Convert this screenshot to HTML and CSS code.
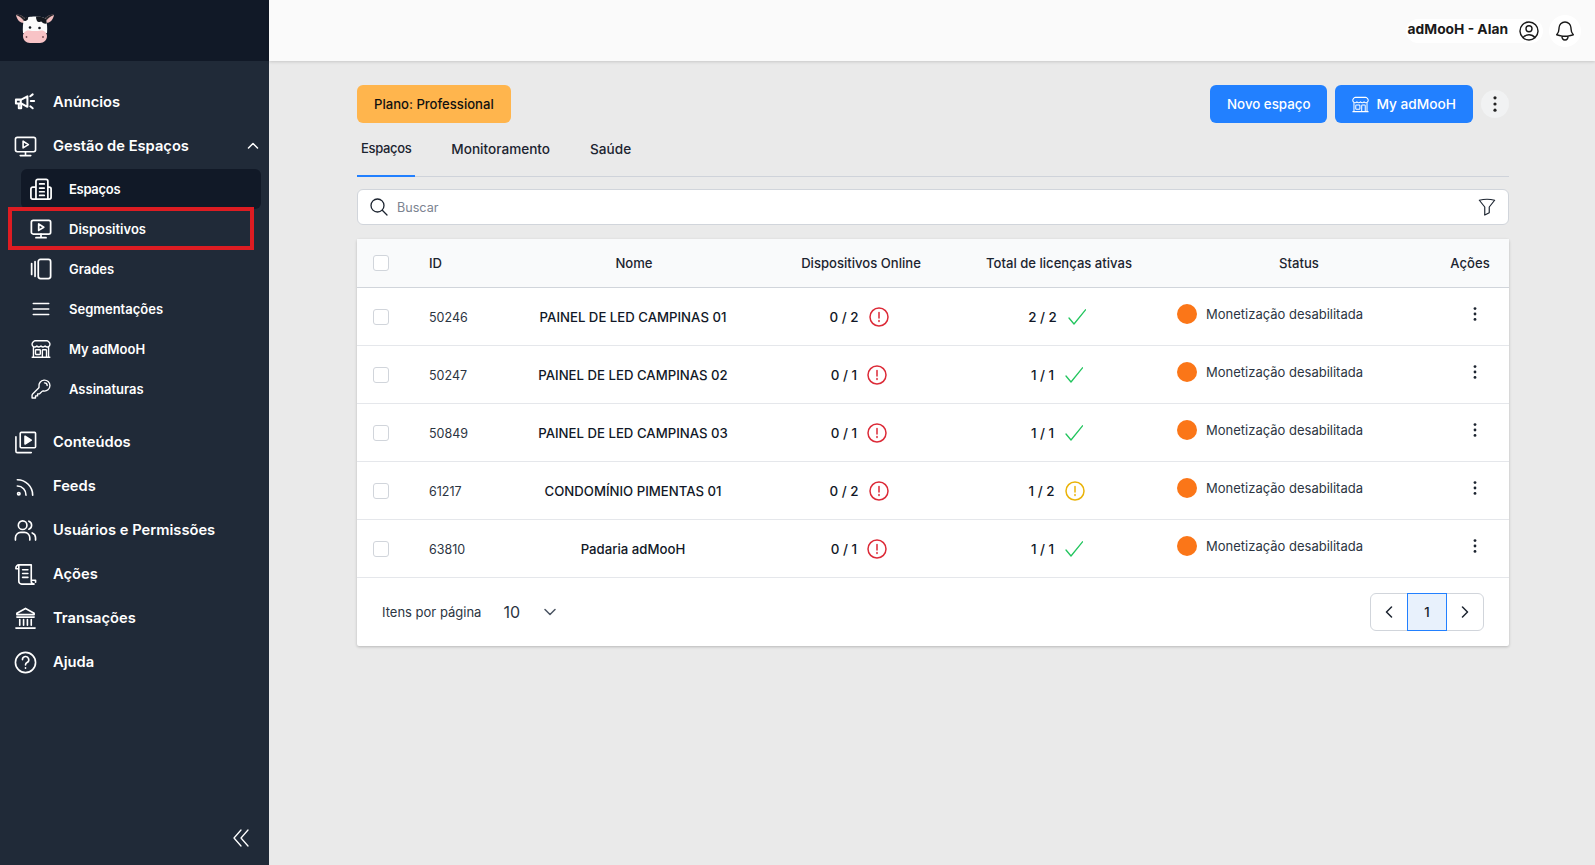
FILE: index.html
```html
<!DOCTYPE html>
<html lang="pt-BR">
<head>
<meta charset="utf-8">
<title>adMooH - Espaços</title>
<link rel="stylesheet" href="styles.css">
</head>
<body>
<svg class="defs" width="0" height="0" aria-hidden="true">
  <symbol id="i-store" viewBox="0 0 24 24"><path d="M13.5 21v-7.5a.75.75 0 0 1 .75-.75h3a.75.75 0 0 1 .75.75V21m-4.5 0H2.36m11.14 0H18m0 0h3.64m-1.39 0V9.349M3.75 21V9.349m0 0a3.001 3.001 0 0 0 3.75-.615A2.993 2.993 0 0 0 9.75 9.75c.896 0 1.7-.393 2.25-1.016a2.993 2.993 0 0 0 2.25 1.016c.896 0 1.7-.393 2.25-1.016a3.001 3.001 0 0 0 3.75.614m-16.5 0a3.004 3.004 0 0 1-.621-4.72l1.189-1.19A1.5 1.5 0 0 1 5.378 3h13.243a1.5 1.5 0 0 1 1.06.44l1.19 1.189a3 3 0 0 1-.621 4.72M6.75 18h3.75a.75.75 0 0 0 .75-.75V13.5a.75.75 0 0 0-.75-.75H6.75a.75.75 0 0 0-.75.75v3.75c0 .414.336.75.75.75Z"/></symbol>
  <symbol id="i-screen" viewBox="0 0 24 24"><rect x="1.5" y="2.5" width="21" height="15" rx="2"/><path d="M12 17.5v4M6.5 21.5h11"/><path d="M9.5 6.5v7l5.5-3.5z"/></symbol>
  <symbol id="i-alert" viewBox="0 0 20 20"><circle cx="10" cy="10" r="9"/><path d="M10 5.5v5.5M10 13.6v.9"/></symbol>
  <symbol id="i-check" viewBox="0 0 18 16"><path d="M1 9l5 6L17.500 .8"/></symbol>
  <symbol id="i-dots" viewBox="0 0 4 18"><circle cx="2" cy="2" r="1.800"/><circle cx="2" cy="9" r="1.800"/><circle cx="2" cy="16" r="1.800"/></symbol>
</svg>

<div class="app">
  <aside class="sidebar">
    <div class="brand">
      <svg class="logo" viewBox="0 0 40 32" aria-hidden="true">
        <path d="M9 9C5 9 2 6 1 1c3-1 8 1 10 5z" fill="#f2bfc0"/>
        <path d="M1 1c3-1 8 1 10 5l-2 1C7 4 4 2 1 1z" fill="#2a2a2e"/>
        <path d="M31 9c4 0 7-3 8-8-3-1-8 1-10 5z" fill="#f2bfc0"/>
        <path d="M39 1c-3-1-8 1-10 5l2 1c2-3 5-5 8-6z" fill="#2a2a2e"/>
        <path d="M9 5c3-3.500 19-3.500 22 0 1 4 1.500 9 1 14H8c-.5-5 0-10 1-14z" fill="#fbfbfb"/>
        <path d="M21 2.500c4-.3 8 .5 10 2.500.4 1.500.6 3 .8 4.500-2.500.5-4.500-.5-5.500-2-1.500.8-3.500.5-4.300-.5-.8-1.500-1-3-1-4.500z" fill="#14181f"/>
        <path d="M9 5c1-1 2.500-1.800 4-2.200.5 1.500-.5 3.500-2 4-1 .3-1.800.2-2.500-.2z" fill="#14181f"/>
        <path d="M8 22c0-3.500 3-6 6-5.500 4 .7 8 .7 12 0 3-.5 6 2 6 5.500 0 4-3 7-7 7H15c-4 0-7-3-7-7z" fill="#f8c3c6"/>
        <circle cx="15" cy="13.500" r="1.300" fill="#14181f"/><circle cx="24.500" cy="14" r="1.300" fill="#14181f"/>
        <circle cx="11.500" cy="23" r=".9" fill="#7a5055"/><circle cx="28" cy="23" r=".9" fill="#7a5055"/>
      </svg>
    </div>
    <nav class="nav">
      <a class="nav-item">
        <svg class="ico heavy" viewBox="0 0 24 24"><path d="M2 9h5.500L14 5.500v11L7.500 13H2z"/><path d="M7 9.500v3M5 13.500v4.500h2.500v-4M17.500 10.500h3.500M17 5.500l2.500-2M17 16l2.500 2"/></svg>
        <span>Anúncios</span>
      </a>
      <a class="nav-item">
        <svg class="ico"><use href="#i-screen"/></svg>
        <span class="grow">Gestão de Espaços</span>
        <svg class="chev" viewBox="0 0 12 8"><path d="M1.500 6L6 1.500 10.500 6"/></svg>
      </a>
      <div class="sub">
        <a class="sub-item active">
          <svg class="ico strong" viewBox="0 0 24 24"><path d="M6.500 23V3.500a2 2 0 0 1 2-2h9a2 2 0 0 1 2 2V23M6.500 10H3a2 2 0 0 0-2 2v9a2 2 0 0 0 2 2h18a2 2 0 0 0 2-2v-9a2 2 0 0 0-2-2h-1.500M10.500 6.500h5M10.500 11h5M10.500 15h5M10.500 19h5"/></svg>
          <span class="tight">Espaços</span>
        </a>
        <a class="sub-item flagged">
          <svg class="ico strong"><use href="#i-screen"/></svg>
          <span>Dispositivos</span>
        </a>
        <a class="sub-item">
          <svg class="ico strong" viewBox="0 0 24 24"><rect x="9" y="1.500" width="13.500" height="21" rx="2.500"/><path d="M1.800 6v12M5.500 4v16"/></svg>
          <span>Grades</span>
        </a>
        <a class="sub-item">
          <svg class="ico" viewBox="0 0 24 24"><path d="M3.500 6h17M3.500 12h17M3.500 18h17"/></svg>
          <span>Segmentações</span>
        </a>
        <a class="sub-item">
          <svg class="ico"><use href="#i-store"/></svg>
          <span>My adMooH</span>
        </a>
        <a class="sub-item">
          <svg class="ico" viewBox="0 0 24 24"><path d="M15.750 5.250a3 3 0 0 1 3 3m3 0a6 6 0 0 1-7.029 5.912c-.563-.097-1.159.026-1.563.43L10.500 17.250H8.250v2.250H6v2.250H2.250v-2.818c0-.597.237-1.170.659-1.591l6.499-6.499c.404-.404.527-1 .43-1.563A6 6 0 1 1 21.750 8.250Z"/></svg>
          <span>Assinaturas</span>
        </a>
      </div>
      <a class="nav-item">
        <svg class="ico" viewBox="0 0 24 24"><rect x="6.500" y="1.500" width="16" height="16" rx="1"/><path d="M11.500 5.500v8l6.500-4z" fill="currentColor"/><path d="M2 6v15a1.500 1.500 0 0 0 1.500 1.500H18"/></svg>
        <span>Conteúdos</span>
      </a>
      <a class="nav-item">
        <svg class="ico" viewBox="0 0 24 24"><path d="M3.500 11.500a9 9 0 0 1 9 9.500M3.500 5a16 16 0 0 1 16 16"/><circle cx="5" cy="19.500" r="1.300"/></svg>
        <span>Feeds</span>
      </a>
      <a class="nav-item">
        <svg class="ico" viewBox="0 0 24 24"><circle cx="9" cy="6.500" r="4.500"/><path d="M1.500 22v-2.500A5.500 5.500 0 0 1 7 14h4a5.500 5.500 0 0 1 5.500 5.500V22M15.500 2.300a4.500 4.500 0 0 1 0 8.400M19 14.500a5.500 5.500 0 0 1 3.500 5V22"/></svg>
        <span>Usuários e Permissões</span>
      </a>
      <a class="nav-item">
        <svg class="ico" viewBox="0 0 24 24"><path d="M5 2h13v17a3 3 0 0 0 3 3H8a3 3 0 0 1-3-3V2zM5 2a3 3 0 0 0-3 3v1h3M9 7h5.500M9 11h5.500M9 15h5.500M18 18h4.500v2"/></svg>
        <span>Ações</span>
      </a>
      <a class="nav-item">
        <svg class="ico" viewBox="0 0 24 24"><path d="M12 1.500L3 6.500v1.500h18V6.500zM3 10.500h18M6 13v6M10 13v6M14 13v6M18 13v6M2 22h20"/></svg>
        <span>Transações</span>
      </a>
      <a class="nav-item">
        <svg class="ico" viewBox="0 0 24 24"><circle cx="12" cy="12" r="10.500"/><path d="M8.800 9a3.300 3.300 0 1 1 4.800 3c-1 .6-1.600 1.300-1.600 2.500M12 17.500v.5"/></svg>
        <span>Ajuda</span>
      </a>
    </nav>
    <div class="collapse">
      <svg viewBox="0 0 16 18"><path d="M8 1L1 9l7 8M15 1L8 9l7 8"/></svg>
    </div>
  </aside>

  <div class="page">
    <header class="topbar">
      <div class="user">
        <span class="user-name">adMooH - Alan</span>
        <svg class="top-ico" viewBox="0 0 24 24"><path d="M17.982 18.725A7.488 7.488 0 0 0 12 15.750a7.488 7.488 0 0 0-5.982 2.975m11.963 0a9 9 0 1 0-11.963 0m11.963 0A8.966 8.966 0 0 1 12 21a8.966 8.966 0 0 1-5.982-2.275M15 9.750a3 3 0 1 1-6 0 3 3 0 0 1 6 0Z"/></svg>
      </div>
      <div class="bell">
        <svg class="top-ico" viewBox="0 0 24 24"><path d="M14.857 17.082a23.848 23.848 0 0 0 5.454-1.310A8.967 8.967 0 0 1 18 9.750V9A6 6 0 0 0 6 9v.75a8.967 8.967 0 0 1-2.312 6.022c1.733.64 3.560 1.085 5.455 1.310m5.714 0a24.255 24.255 0 0 1-5.714 0m5.714 0a3 3 0 1 1-5.714 0"/></svg>
      </div>
    </header>

    <main class="content">
      <div class="actions">
        <div class="plan">Plano: Professional</div>
        <div class="action-group">
          <button class="btn">Novo espaço</button>
          <button class="btn btn-store"><svg class="btn-ico"><use href="#i-store"/></svg>My adMooH</button>
          <button class="more"><svg class="more-ico"><use href="#i-dots"/></svg></button>
        </div>
      </div>

      <div class="tabs">
        <a class="tab current">Espaços</a>
        <a class="tab">Monitoramento</a>
        <a class="tab">Saúde</a>
      </div>

      <div class="search">
        <svg class="search-ico" viewBox="0 0 18 18"><circle cx="7.500" cy="7.500" r="6.500"/><path d="M12.300 12.300L17 17"/></svg>
        <span class="placeholder">Buscar</span>
        <svg class="filter-ico" viewBox="0 0 20 20"><path d="M1.500 2.500c5-1.300 12-1.300 17 0L12.500 10v6.500l-5 2.500v-9z"/></svg>
      </div>

      <section class="card">
        <table class="grid">
          <colgroup>
            <col class="c-check"><col class="c-id"><col class="c-name"><col class="c-dev"><col class="c-lic"><col class="c-status"><col class="c-act">
          </colgroup>
          <thead>
            <tr>
              <th class="cb"><i class="box"></i></th>
              <th class="left">ID</th>
              <th>Nome</th>
              <th>Dispositivos Online</th>
              <th>Total de licenças ativas</th>
              <th>Status</th>
              <th>Ações</th>
            </tr>
          </thead>
          <tbody>
            <tr>
              <td class="cb"><i class="box"></i></td><td class="id">50246</td><td class="name">PAINEL DE LED CAMPINAS 01</td>
              <td><div class="count">0 / 2<svg class="alert red"><use href="#i-alert"/></svg></div></td>
              <td><div class="count lic">2 / 2<svg class="check"><use href="#i-check"/></svg></div></td>
              <td class="status"><div class="st"><i class="dot"></i>Monetização desabilitada</div></td>
              <td class="act"><svg class="kebab"><use href="#i-dots"/></svg></td>
            </tr>
            <tr>
              <td class="cb"><i class="box"></i></td><td class="id">50247</td><td class="name">PAINEL DE LED CAMPINAS 02</td>
              <td><div class="count">0 / 1<svg class="alert red"><use href="#i-alert"/></svg></div></td>
              <td><div class="count lic">1 / 1<svg class="check"><use href="#i-check"/></svg></div></td>
              <td class="status"><div class="st"><i class="dot"></i>Monetização desabilitada</div></td>
              <td class="act"><svg class="kebab"><use href="#i-dots"/></svg></td>
            </tr>
            <tr>
              <td class="cb"><i class="box"></i></td><td class="id">50849</td><td class="name">PAINEL DE LED CAMPINAS 03</td>
              <td><div class="count">0 / 1<svg class="alert red"><use href="#i-alert"/></svg></div></td>
              <td><div class="count lic">1 / 1<svg class="check"><use href="#i-check"/></svg></div></td>
              <td class="status"><div class="st"><i class="dot"></i>Monetização desabilitada</div></td>
              <td class="act"><svg class="kebab"><use href="#i-dots"/></svg></td>
            </tr>
            <tr>
              <td class="cb"><i class="box"></i></td><td class="id">61217</td><td class="name">CONDOMÍNIO PIMENTAS 01</td>
              <td><div class="count">0 / 2<svg class="alert red"><use href="#i-alert"/></svg></div></td>
              <td><div class="count lic">1 / 2<svg class="alert amber"><use href="#i-alert"/></svg></div></td>
              <td class="status"><div class="st"><i class="dot"></i>Monetização desabilitada</div></td>
              <td class="act"><svg class="kebab"><use href="#i-dots"/></svg></td>
            </tr>
            <tr>
              <td class="cb"><i class="box"></i></td><td class="id">63810</td><td class="name">Padaria adMooH</td>
              <td><div class="count">0 / 1<svg class="alert red"><use href="#i-alert"/></svg></div></td>
              <td><div class="count lic">1 / 1<svg class="check"><use href="#i-check"/></svg></div></td>
              <td class="status"><div class="st"><i class="dot"></i>Monetização desabilitada</div></td>
              <td class="act"><svg class="kebab"><use href="#i-dots"/></svg></td>
            </tr>
          </tbody>
        </table>
        <div class="foot">
          <div class="per-page">
            <span class="per-label">Itens por página</span>
            <span class="per-value">10</span>
            <svg class="per-chev" viewBox="0 0 12 8"><path d="M1 1.500l5 5 5-5"/></svg>
          </div>
          <div class="pager">
            <button class="pg"><svg viewBox="0 0 8 12"><path d="M6.500 1L1.500 6l5 5"/></svg></button>
            <button class="pg on">1</button>
            <button class="pg"><svg viewBox="0 0 8 12"><path d="M1.500 1l5 5-5 5"/></svg></button>
          </div>
        </div>
      </section>
    </main>
  </div>
</div>
</body>
</html>
```

FILE: styles.css
```css
* { box-sizing: border-box; }
html, body { margin: 0; height: 100%; overflow: hidden; }
body { font-family: Inter, "Noto Sans", sans-serif; color: #111827; background: #eaeaea; }
.defs { position: absolute; }
svg { display: block; fill: none; stroke: currentColor; stroke-linecap: round; stroke-linejoin: round; }

.app { display: flex; height: 865px; }

/* Sidebar */
.sidebar { width: 269px; flex: none; background: #202a38; color: #fff; display: flex; flex-direction: column; }
.brand { height: 61px; background: #111927; padding: 14px 0 0 15px; flex: none; }
.logo { width: 40px; height: 32px; stroke: none; }
.nav { padding-top: 19px; flex: 1; }
.nav-item { display: flex; align-items: center; height: 44px; padding: 0 14px; font-size: 14.7px; font-weight: 600; gap: 16px; }
.nav-item .ico { width: 23px; height: 23px; stroke-width: 1.700; flex: none; }
.nav-item .ico.heavy { stroke-width: 2.100; }
.grow { flex: 1; }
.chev { width: 12px; height: 8px; stroke-width: 1.500; margin-right: -4px; }
.sub { padding: 1px 0 11px; }
.sub-item { display: flex; align-items: center; height: 40px; margin: 0 8px 0 21px; padding: 0 9px; border-radius: 6px; font-size: 13px; font-weight: 600; gap: 17px; position: relative; }
.sub-item .ico { width: 22px; height: 22px; stroke-width: 1.500; flex: none; }
.sub-item .ico.strong { stroke-width: 1.900; }
.tight { letter-spacing: -.3px; }
.sub-item.active { background: #111927; }
.sub-item.flagged::after { content: ""; position: absolute; left: -13px; right: 7px; top: -2px; bottom: -1px; border: 4px solid #dd1c22; pointer-events: none; }
.collapse { height: 55px; display: flex; justify-content: flex-end; padding: 19px 20px 0 0; flex: none; }
.collapse svg { width: 16px; height: 18px; stroke-width: 1.300; }

/* Top bar */
.page { flex: 1; min-width: 0; display: flex; flex-direction: column; }
.topbar { height: 61px; background: #fafafa; box-shadow: 0 1px 3px rgba(0,0,0,.15); display: flex; justify-content: flex-end; align-items: center; padding-right: 14px; gap: 6px; flex: none; }
.user { display: flex; align-items: center; gap: 9px; height: 24px; background: #fff; border-radius: 12px; padding: 0 2px; font-size: 13.800px; font-weight: 700; color: #1a1a1a; }
.user-name { padding-bottom: 4px; }
.bell { width: 32px; height: 32px; border-radius: 50%; background: #fff; display: flex; align-items: center; justify-content: center; }
.top-ico { width: 24px; height: 24px; stroke-width: 1.400; color: #1a1a1a; }

/* Content */
.content { padding: 24px 86px 0 88px; }
.actions { display: flex; justify-content: space-between; align-items: center; height: 38px; }
.plan { background: #ffb54d; border-radius: 6px; height: 38px; padding: 0 17px; font-size: 13.100px; font-weight: 500; display: flex; align-items: center; color: #111; }
.action-group { display: flex; align-items: center; gap: 8px; }
.btn { height: 38px; border: 0; border-radius: 6px; background: #2280ff; color: #fff; font: 500 13.300px Inter, sans-serif; padding: 0 17px; display: flex; align-items: center; gap: 6px; }
.btn-store { font-size: 13.700px; padding: 0 17px 0 16px; }
.btn-ico { width: 19px; height: 19px; stroke-width: 1.300; }
.more { width: 28px; height: 28px; border: 0; border-radius: 50%; background: #f1f2f3; display: flex; align-items: center; justify-content: center; padding: 0; color: #222; }
.more-ico { width: 4px; height: 16px; fill: currentColor; stroke: none; }

.tabs { display: flex; gap: 32px; margin-top: 7px; height: 47px; border-bottom: 1px solid #cfd3da; }
.tab { padding: 0 4px 9px; height: 47px; display: flex; align-items: center; font-size: 13.600px; font-weight: 500; color: #1c2430; }
.tab.current { border-bottom: 2px solid #2280ff; font-size: 13px; letter-spacing: -.35px; }

.search { display: flex; align-items: center; height: 36px; margin-top: 12px; background: #fff; border: 1px solid #d1d5db; border-radius: 6px; padding: 0 12px; }
.search-ico { width: 18px; height: 18px; stroke-width: 1.300; color: #1c2430; }
.placeholder { flex: 1; margin-left: 9px; font-size: 12.600px; color: #7b8390; }
.filter-ico { width: 18px; height: 18px; stroke-width: 1.300; color: #1c2430; }

/* Table */
.card { margin-top: 14px; background: #fff; border-radius: 2px; box-shadow: 0 1px 3px rgba(0,0,0,.22); }
.grid { width: 100%; table-layout: fixed; border-collapse: collapse; }
.c-check { width: 60px; } .c-id { width: 80px; } .c-name { width: 274px; } .c-dev { width: 180px; } .c-lic { width: 216px; } .c-status { width: 264px; } .c-act { width: 78px; }
.grid thead tr { height: 48px; background: #f9fafb; border-bottom: 1px solid #d1d5db; }
th { font-size: 13.100px; font-weight: 500; color: #1c2430; padding: 0; text-align: center; }
.grid tbody tr { height: 58px; border-bottom: 1px solid #e5e7eb; }
td { padding: 2px 0 0; font-size: 13px; text-align: center; color: #111827; }
.left, .id { text-align: left; padding-left: 12px; }
.id { color: #2c3542; font-size: 12.500px; }
.cb { padding-left: 16px; text-align: left; }
.box { display: block; width: 16px; height: 16px; border: 1px solid #d1d5db; border-radius: 3px; background: #fff; }
.name { font-weight: 500; font-size: 13.200px; padding-right: 2px; }
.count { display: flex; justify-content: center; align-items: center; gap: 10px; font-weight: 500; font-size: 13.400px; padding-right: 4px; }
.lic { gap: 11px; }
.alert { width: 20px; height: 20px; stroke-width: 1.500; flex: none; }
.red { color: #dc2a37; } .amber { color: #eab308; }
.check { width: 18px; height: 16px; stroke-width: 1.300; color: #22c55e; flex: none; }
.status { padding: 0 0 4px 10px; text-align: left; }
.st { display: flex; align-items: center; gap: 9px; color: #2c3542; }
.dot { width: 20px; height: 20px; border-radius: 50%; background: #fb7618; flex: none; }
.act { padding: 0 0 4px; }
.kebab { width: 4px; height: 14px; margin-left: 42px; fill: #1c2430; stroke: none; }

.foot { display: flex; justify-content: space-between; align-items: center; height: 68px; padding: 0 25px; }
.per-page { display: flex; align-items: center; padding-top: 1px; }
.per-label { font-size: 13px; color: #2c3542; }
.per-value { font-size: 16px; margin-left: 22px; color: #2c3542; }
.per-chev { width: 12px; height: 8px; margin-left: 24px; stroke-width: 1.500; color: #4b5563; }
.pager { display: flex; height: 38px; border: 1px solid #d1d5db; border-radius: 6px; }
.pg { width: 36px; border: 0; background: transparent; font: 500 13px Inter, sans-serif; color: #111827; display: flex; align-items: center; justify-content: center; padding: 0; }
.pg svg { width: 8px; height: 12px; stroke-width: 1.500; color: #1c2430; }
.pg.on { width: 40px; margin: -1px 0; background: #e8f1fc; box-shadow: inset 0 0 0 1px #2280ff; }
```
